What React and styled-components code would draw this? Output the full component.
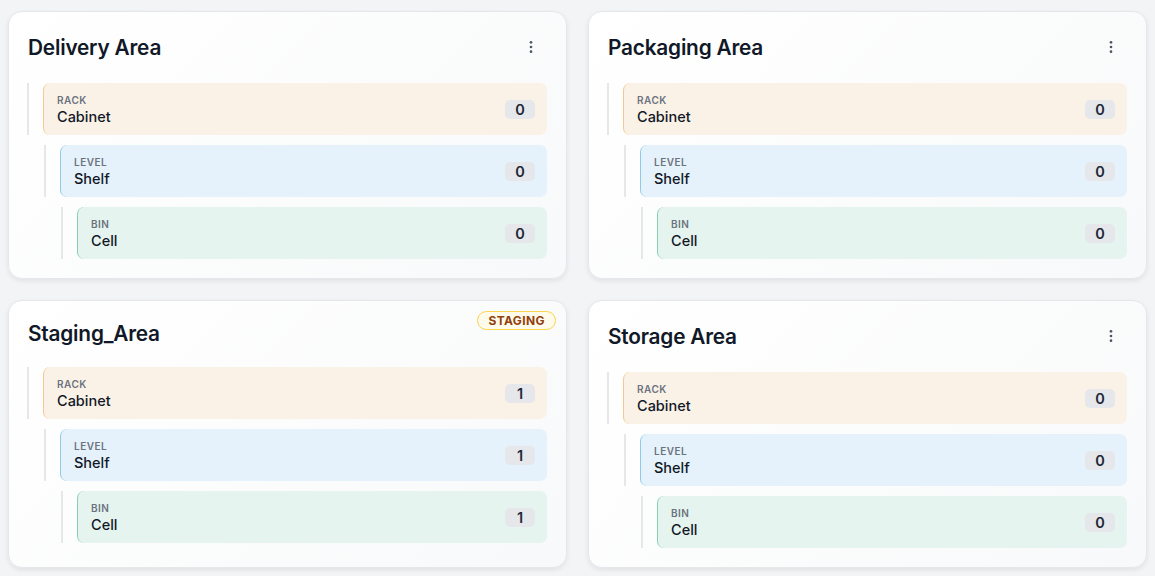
import React from "react";
import styled, { createGlobalStyle } from "styled-components";

const Global = createGlobalStyle`
  body { margin: 0; background: #f3f4f6; font-family: Inter, "Noto Sans", sans-serif; }
`;
const Grid = styled.div`
  display: grid; grid-template-columns: 1fr 1fr; gap: 21px 21px;
  padding: 11px 8px 8px 8px;
`;
const Card = styled.div`
  position: relative; background: linear-gradient(135deg, #ffffff, #f8f9fa);
  border: 1px solid #e5e7eb; border-radius: 14px;
  box-shadow: 0 2px 5px rgba(0,0,0,0.08);
  padding: 19px 19px 19px 18px; display: flex; flex-direction: column; gap: 20px;
`;
const Header = styled.div`
  display: flex; align-items: center; justify-content: space-between;
  min-height: ${p => (p.$menu ? 32 : 27)}px;
`;
const Title = styled.h2`
  margin: 0 0 0 1px; font-size: 20.8px; font-weight: 600; color: #111827; letter-spacing: -0.2px;
`;
const Menu = styled.button`
  width: 32px; height: 32px; border: none; background: none; display: flex;
  align-items: center; justify-content: center; color: #4b5563; padding: 0;
`;
const Badge = styled.span`
  position: absolute; top: 10px; right: 10px; font-size: 12px; font-weight: 700;
  color: #92400e; background: #fffbeb; border: 1px solid #fcd34d; border-radius: 999px;
  padding: 1px 10px; letter-spacing: 0.4px;
`;
const List = styled.div` display: flex; flex-direction: column; gap: 10px; `;
const Row = styled.div`
  display: flex; margin-left: ${p => p.$depth * 17}px;
  border-left: 2px solid #e5e7eb; padding-left: 14px;
`;
const Box = styled.div`
  flex: 1; height: 52px; box-sizing: border-box; border-radius: 7px;
  background: ${p => p.$bg}; border-left: 1px solid ${p => p.$line};
  display: flex; align-items: center; justify-content: space-between; padding: 0 12px 0 13px;
`;
const Label = styled.div` font-size: 10px; font-weight: 600; color: #6b7280; letter-spacing: 0.5px; `;
const Name = styled.div` font-size: 14.5px; font-weight: 500; color: #111827; margin-top: 2px; `;
const Count = styled.span`
  background: #e5e7eb; border-radius: 5px; font-size: 14.5px; font-weight: 600; color: #1f2937;
  min-width: 30px; height: 19px; display: flex; align-items: center; justify-content: center;
`;

const levels = [
  ["RACK", "Cabinet", "#fbf2e7", "#f3c98f"],
  ["LEVEL", "Shelf", "#e6f2fb", "#8fcbe8"],
  ["BIN", "Cell", "#e5f4ee", "#88d0b2"],
];
const cards = [
  { name: "Delivery Area", n: 0, menu: true },
  { name: "Packaging Area", n: 0, menu: true },
  { name: "Staging_Area", n: 1, badge: true },
  { name: "Storage Area", n: 0, menu: true },
];

const Dots = () => (
  <svg width="16" height="16" viewBox="0 0 24 24" fill="currentColor">
    <circle cx="12" cy="5" r="2" /><circle cx="12" cy="12" r="2" /><circle cx="12" cy="19" r="2" />
  </svg>
);

export default function App() {
  return (
    <>
      <Global />
      <Grid>
        {cards.map(c => (
          <Card key={c.name}>
            {c.badge && <Badge>STAGING</Badge>}
            <Header $menu={c.menu}>
              <Title>{c.name}</Title>
              {c.menu && <Menu><Dots /></Menu>}
            </Header>
            <List>
              {levels.map(([l, n, bg, line], i) => (
                <Row key={l} $depth={i}>
                  <Box $bg={bg} $line={line}>
                    <div><Label>{l}</Label><Name>{n}</Name></div>
                    <Count>{c.n}</Count>
                  </Box>
                </Row>
              ))}
            </List>
          </Card>
        ))}
      </Grid>
    </>
  );
}
